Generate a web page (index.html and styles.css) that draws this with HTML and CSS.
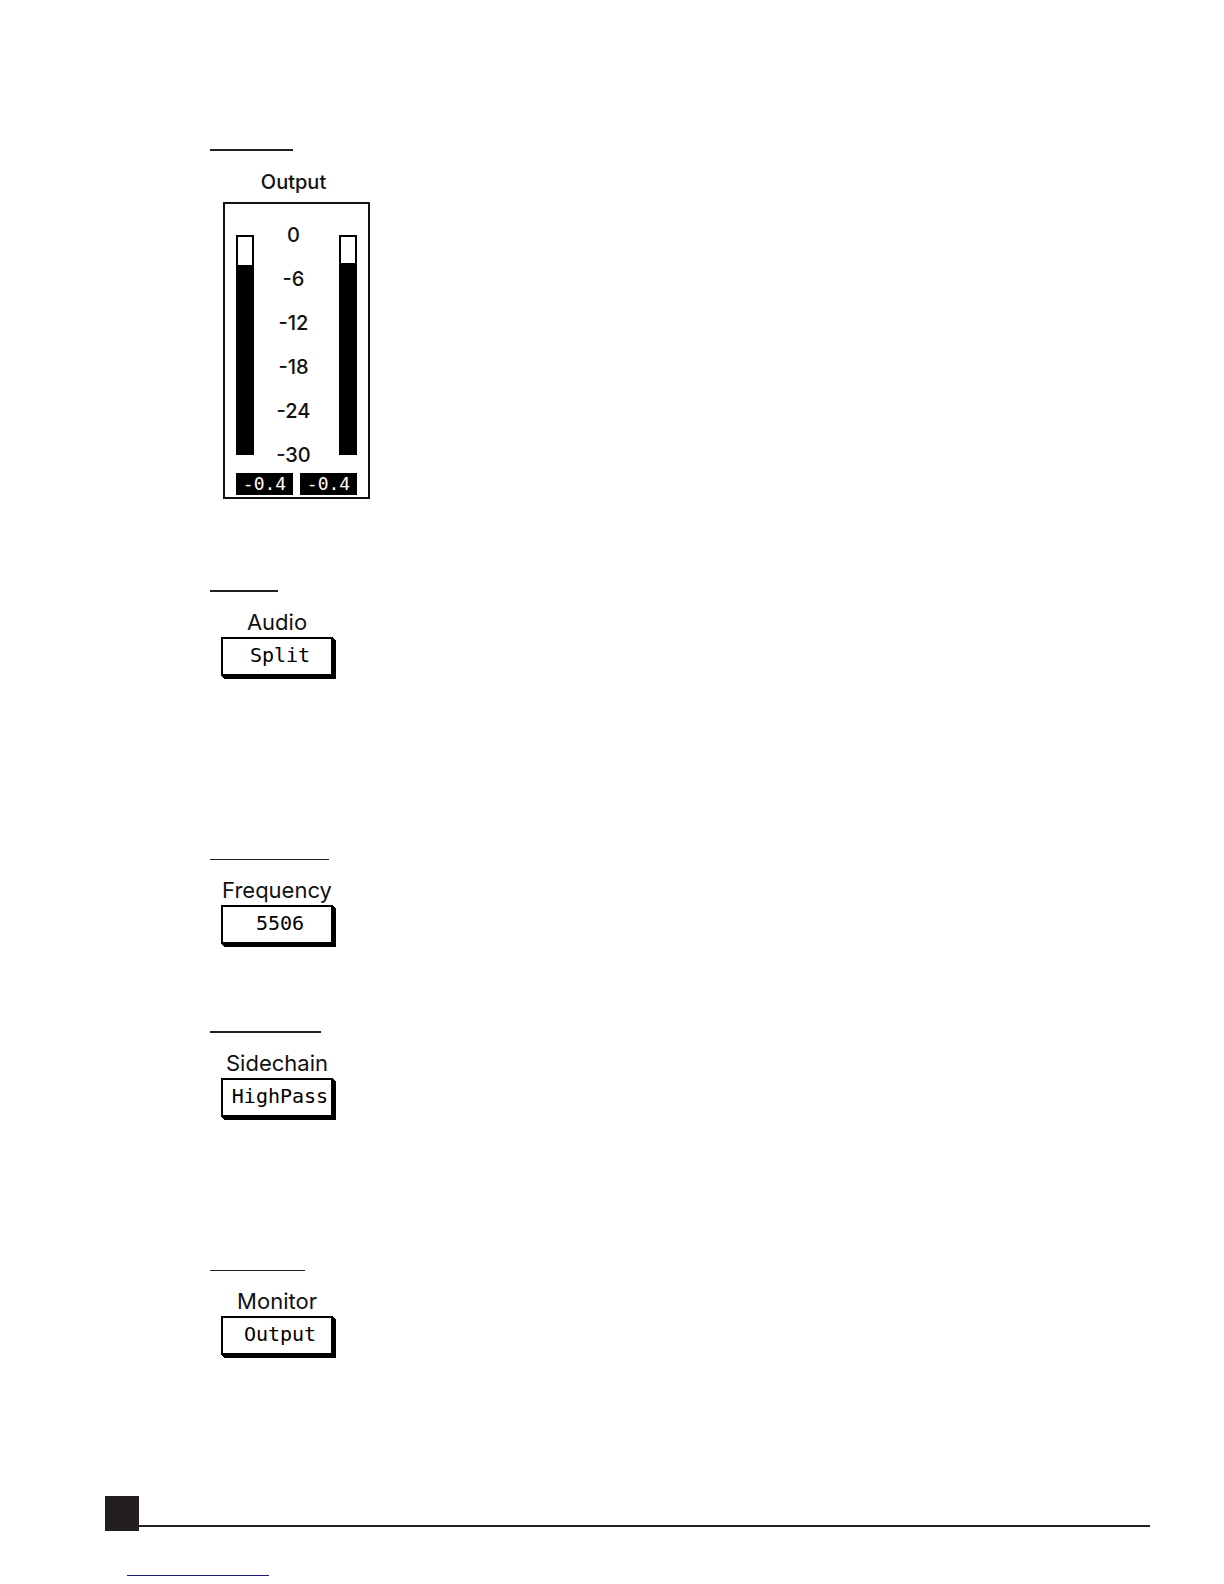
FILE: index.html
```html
<!DOCTYPE html>
<html lang="en">
<head>
    <meta charset="UTF-8">
    <meta name="viewport" content="width=device-width, initial-scale=1.0">
    <title>Output</title>
    <link rel="stylesheet" href="styles.css">
</head>
<body>
    <main>
        <!-- Output meter -->
        <section class="entry entry-meter">
            <hr class="rule rule-meter">
            <div class="meter">
                <h2 class="meter-title">Output</h2>
                <div class="meter-panel">
                    <div class="meter-body">
                        <div class="bar"><div class="bar-fill" style="height: 87%"></div></div>
                        <ul class="scale">
                            <li>0</li>
                            <li>-6</li>
                            <li>-12</li>
                            <li>-18</li>
                            <li>-24</li>
                            <li>-30</li>
                        </ul>
                        <div class="bar"><div class="bar-fill" style="height: 88%"></div></div>
                    </div>
                    <div class="readouts">
                        <output class="readout">-0.4</output>
                        <output class="readout">-0.4</output>
                    </div>
                </div>
            </div>
        </section>

        <!-- Controls -->
        <section class="entry entry-audio">
            <hr class="rule rule-audio">
            <div class="control">
                <label for="audio">Audio</label>
                <button type="button" id="audio" class="field">Split</button>
            </div>
        </section>

        <section class="entry entry-frequency">
            <hr class="rule rule-thin rule-frequency">
            <div class="control">
                <label for="frequency">Frequency</label>
                <input type="text" inputmode="numeric" id="frequency" class="field" value="5506">
            </div>
        </section>

        <section class="entry entry-sidechain">
            <hr class="rule rule-sidechain">
            <div class="control">
                <label for="sidechain">Sidechain</label>
                <button type="button" id="sidechain" class="field">HighPass</button>
            </div>
        </section>

        <section class="entry entry-monitor">
            <hr class="rule rule-thin rule-monitor">
            <div class="control">
                <label for="monitor">Monitor</label>
                <button type="button" id="monitor" class="field">Output</button>
            </div>
        </section>
    </main>

    <!-- Footer -->
    <footer>
        <div class="footer-bar">
            <div class="page-box"></div>
            <hr class="footer-line">
        </div>
        <hr class="link-line">
    </footer>
</body>
</html>
```

FILE: styles.css
```css
* {
    box-sizing: border-box;
}
body {
    margin: 0;
    background-color: #fff;
    color: #111;
    font-family: Inter, "Liberation Sans", sans-serif;
}
main {
    padding: 149px 24px 0 210px;
}
hr {
    margin: 0;
    border: none;
}
.entry-meter {
    margin-bottom: 91px;
}
.entry-audio {
    margin-bottom: 180px;
}
.entry-frequency {
    margin-bottom: 84px;
}
.entry-sidechain {
    margin-bottom: 150px;
}
.entry-monitor {
    margin-bottom: 138px;
}

/* Rules above each entry */
.rule {
    height: 2px;
    background-color: #231f20;
}
.rule-thin {
    height: 1px;
}
.rule-meter {
    width: 83px;
}
.rule-audio {
    width: 68px;
}
.rule-frequency {
    width: 119px;
}
.rule-sidechain {
    width: 111px;
}
.rule-monitor {
    width: 95px;
}

/* Meter */
.meter {
    width: 147px;
    margin-left: 13px;
    padding-top: 18px;
}
.meter-title {
    margin: 0 0 7px;
    padding-right: 6px;
    font-size: 20px;
    font-weight: 500;
    line-height: 26px;
    text-align: center;
}
.meter-panel {
    border: 2px solid #111;
    padding: 18px 11px 2px;
}
.meter-body {
    display: flex;
    justify-content: space-between;
    align-items: center;
    margin-bottom: 5px;
}
.bar {
    display: flex;
    align-items: flex-end;
    width: 18px;
    height: 220px;
    border: 2px solid #000;
}
.bar-fill {
    width: 100%;
    background-color: #000;
}
.scale {
    display: grid;
    gap: 18px;
    list-style: none;
    margin: 0;
    padding: 0 6px 0 0;
    font-size: 20px;
    font-weight: 500;
    line-height: 26px;
    text-align: center;
}
.readouts {
    display: flex;
    gap: 7px;
}
.readout {
    flex: 1;
    background-color: #000;
    color: #fff;
    font-family: "DejaVu Sans Mono", monospace;
    font-size: 18px;
    line-height: 22px;
    text-align: center;
}

/* Labelled boxes */
.control {
    display: flex;
    flex-direction: column;
    width: 112px;
    margin-left: 11px;
    padding: 17px 0 3px;
}
.control label {
    margin-bottom: 2px;
    font-size: 22px;
    line-height: 26px;
    text-align: center;
    white-space: nowrap;
}
.field {
    width: 100%;
    height: 39px;
    padding: 0 0 4px 6px;
    border: 2px solid #000;
    border-radius: 0;
    background-color: #fff;
    box-shadow: 1px 1px 0 #000, 2px 2px 0 #000, 3px 3px 0 #000;
    color: #000;
    font-family: "DejaVu Sans Mono", monospace;
    font-size: 20px;
    text-align: center;
}
button.field {
    cursor: pointer;
}

/* Footer */
footer {
    padding: 0 74px 8px 105px;
}
.footer-bar {
    display: flex;
    align-items: flex-end;
    margin-bottom: 44px;
}
.page-box {
    width: 34px;
    height: 35px;
    background-color: #231f20;
}
.footer-line {
    flex: 1;
    height: 2px;
    margin-bottom: 4px;
    background-color: #231f20;
}
.link-line {
    width: 142px;
    height: 1px;
    margin-left: 22px;
    background-color: #1b1b7a;
}
```
